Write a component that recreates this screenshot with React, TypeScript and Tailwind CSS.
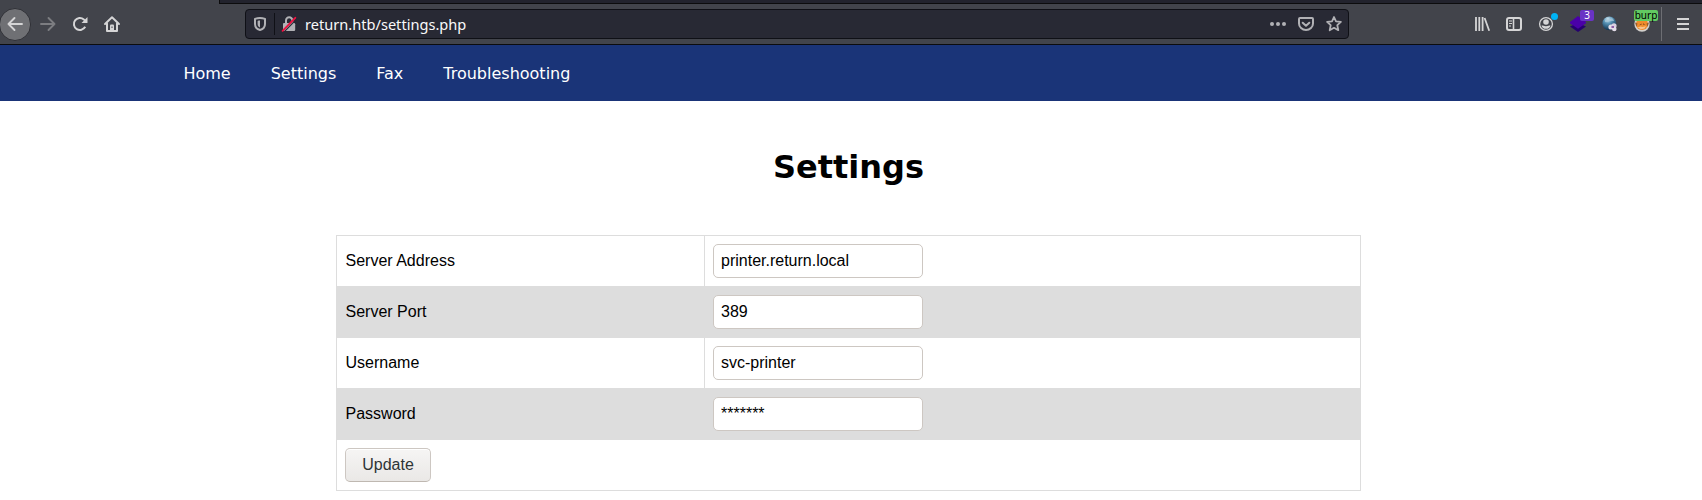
import React from "react";

type IconProps = { children: React.ReactNode; className?: string };

function Icon({ children, className = "" }: IconProps) {
  return (
    <svg viewBox="0 0 16 16" className={`h-4 w-4 shrink-0 overflow-visible ${className}`} fill="none" stroke="currentColor" strokeWidth="2" strokeLinecap="round" strokeLinejoin="round">
      {children}
    </svg>
  );
}

function Slot({ children }: { children: React.ReactNode }) {
  return <div className="relative flex h-8 w-8 shrink-0 items-center justify-center">{children}</div>;
}

function AddressBar() {
  return (
    <div className="ml-[125px] flex h-[30px] w-[1104px] shrink-0 items-center rounded border border-[#0f1016] bg-[#282934] text-[#b1b1b5]">
      <Icon className="ml-[6px]">
        <path d="M8 1.900c1.800 0 3.500.4 5 1V8c0 3-2 5.200-5 6C5 13.200 3 11 3 8V2.900c1.500-.6 3.200-1 5-1z" />
        <path d="M8 4.500c-1 0-1.700.1-2.400.4V8c0 1.800.900 2.900 2.400 3.500z" fill="currentColor" stroke="none" />
      </Icon>
      <div className="ml-[6px] h-[22px] w-px bg-[#0f1016]" />
      <Icon className="ml-[6px]">
        <path d="M5 7V4.500a3.200 3.200 0 0 1 6.400 0V7" strokeLinecap="butt" />
        <path d="M3 7h10a1.200 1.200 0 0 1 1.200 1.200v5.600a1.200 1.200 0 0 1-1.200 1.200H3a1 1 0 0 1-1-1V8a1 1 0 0 1 1-1z" fill="currentColor" stroke="none" />
        <path d="M3.400 15.600 15.600 3.100" stroke="#282934" strokeWidth="1.200" strokeLinecap="butt" />
        <path d="M1.600 14.800 14.300 1.800" stroke="#ed1141" strokeWidth="1.900" />
      </Icon>
      <span className="ml-[8px] font-['Noto_Sans',sans-serif] text-[14.6px] leading-[20px] text-[#f9f9fa]">return.htb/settings.php</span>
      <div className="mr-[6px] ml-auto flex items-center gap-3">
        <Icon>
          <g fill="currentColor" stroke="none">
            <circle cx="2" cy="8" r="2" />
            <circle cx="8" cy="8" r="2" />
            <circle cx="14" cy="8" r="2" />
          </g>
        </Icon>
        <Icon>
          <path d="M2 2h12a1 1 0 0 1 1 1v4.500a7 6.500 0 0 1-14 0V3a1 1 0 0 1 1-1z" />
          <path d="m4.700 6.700 3.300 3.100 3.300-3.100" />
        </Icon>
        <Icon>
          <path d="M8 1 10 5.400l4.900.5-3.600 3.300 1 5L8 11.800l-4.300 2.400 1-5L1.100 5.900 6 5.400z" strokeWidth="1.800" />
        </Icon>
      </div>
    </div>
  );
}

function Extensions() {
  return (
    <div className="ml-[117px] flex items-center text-[#d5d5d6]">
      <Slot>
        <Icon>
          <path d="M2 1v14M5.300 1v14M8.600 1v14M10.600 2l4.600 12.800" strokeWidth="1.800" strokeLinecap="butt" />
        </Icon>
      </Slot>
      <Slot>
        <Icon>
          <rect x="1" y="2" width="14" height="12" rx="2" />
          <path d="M7.500 2v12" strokeWidth="1.600" />
          <path d="M3 5h3M3 7.500h3M3 10h2" strokeWidth="1" strokeLinecap="butt" />
        </Icon>
      </Slot>
      <Slot>
        <Icon>
          <circle cx="8" cy="8" r="6.400" strokeWidth="1.300" />
          <circle cx="8" cy="6" r="2.800" fill="currentColor" stroke="none" />
          <path d="M3.500 9.700c1.200-.6 1.600.5 4.500.5s3.300-1.100 4.500-.5c-.6 1.900-2.200 3.100-4.500 3.100s-3.900-1.200-4.500-3.100z" fill="currentColor" stroke="none" />
        </Icon>
        <span className="absolute top-[5px] right-[4px] h-[7px] w-[7px] rounded-full bg-[#00b3f4]" />
      </Slot>
      <Slot>
        <Icon>
          <g stroke="none">
            <path d="m0 10.500 8-3.500 8 3.500L8 16z" fill="#25006f" />
            <path d="m0 6 8-6 8 6v1.300l-8 5.500-8-5.500z" fill="#4a00a8" />
          </g>
        </Icon>
        <span className="absolute top-[2px] left-[18px] h-[11px] w-[14px] rounded-[2px] bg-[#6933c4] text-center font-['Noto_Sans',sans-serif] text-[10px] leading-[11px] text-white">3</span>
      </Slot>
      <Slot>
        <Icon>
          <defs>
            <radialGradient id="globe" cx=".4" cy=".2" r=".8">
              <stop offset="0" stopColor="#d2e6ef" />
              <stop offset=".4" stopColor="#5792b5" />
              <stop offset="1" stopColor="#0d3150" />
            </radialGradient>
          </defs>
          <g stroke="none">
            <circle cx="7.300" cy="7.300" r="6.900" fill="url(#globe)" />
            <path d="M3 4c2-2 4 0 5-1l2-1c1 1 2 2 2 3L8 5 6 6 3 6z" fill="#a9cbdb" opacity=".7" />
            <circle cx="9" cy="11" r="2.600" fill="#e4deea" />
            <circle cx="12" cy="9.800" r="2.600" fill="#d9d0e2" />
            <circle cx="12.300" cy="13" r="2.300" fill="#e4deea" />
            <path d="M9.500 10h2.500v2H9.500z" fill="#8d5fa8" />
          </g>
        </Icon>
      </Slot>
      <Slot>
        <Icon>
          <g stroke="none">
            <circle cx="8" cy="8" r="7.700" fill="#d3d0cc" />
            <circle cx="8" cy="8" r="6" fill="#f08c2c" />
            <path d="m1 6.500 2.500 1L2.500 11zM15 6.500l-2.500 1 1 3.500z" fill="#9a5c28" />
            <path d="m5 9.300 2.500-1.800v1.300zM11.500 9 9 7.200v1.300z" fill="#7a421a" />
            <path d="m3.500 11.500 3-1 2 .5 3.500-.8-1.500 2.300-3.500.7z" fill="#f8c48c" />
          </g>
        </Icon>
        <span className="absolute top-[2px] left-[8px] h-[11px] w-6 rounded-[2px] bg-[#62ca62] text-center font-['Noto_Sans',sans-serif] text-[10px] leading-[11px] text-black">burp</span>
      </Slot>
      <div className="ml-[3px] h-[34px] w-px bg-[#6d6e73]" />
      <Icon className="ml-[13px]">
        <path d="M2 3h12M2 8h12M2 13h12" strokeLinecap="butt" />
      </Icon>
    </div>
  );
}

function Browser() {
  return (
    <div className="flex h-[45px] flex-col border-b border-[#0c0c0d] bg-[#42444b]">
      <div className="ml-[219px] h-1 shrink-0 border-b border-l border-[#0c0c0d] bg-[#22232d]" />
      <div className="flex h-10 items-center text-[#d5d5d6]">
        <div className="-ml-px flex h-[33px] w-8 shrink-0 items-center justify-center rounded-full border border-[#303137] bg-[#6f7074]">
          <Icon>
            <path d="M15 8H1.500M7.500 2 1.500 8l6 6" strokeWidth="1.900" />
          </Icon>
        </div>
        <Icon className="ml-[9px] text-[#7c7d81]">
          <path d="M1 8h13.500M8.500 2l6 6-6 6" strokeWidth="1.900" />
        </Icon>
        <Icon className="ml-4">
          <path d="M13.200 10.800A6 6 0 1 1 11.800 3.400l1.200 1.200" strokeLinecap="butt" />
          <path d="M15.500 1v5.500a.5.500 0 0 1-.5.500H9.500z" fill="currentColor" stroke="none" />
        </Icon>
        <Icon className="ml-4">
          <path d="M1 8 8 1.300 15 8" strokeWidth="1.900" />
          <path d="M3 7.500V15h10V7.500" />
          <path d="M6 14V9.500a1 1 0 0 1 1-1h2a1 1 0 0 1 1 1V14z" fill="currentColor" stroke="none" />
          <path d="M8 10.500v1.500" stroke="#42444b" strokeWidth="1" strokeLinecap="butt" />
        </Icon>
        <AddressBar />
        <Extensions />
      </div>
    </div>
  );
}

const fields = [
  { label: "Server Address", value: "printer.return.local" },
  { label: "Server Port", value: "389" },
  { label: "Username", value: "svc-printer" },
  { label: "Password", value: "*******" },
];

export default function App() {
  return (
    <div className="h-[500px] w-[1702px] overflow-hidden bg-white text-black">
      <Browser />
      <nav className="flex h-14 items-center gap-10 bg-[#1a3478] pt-0.5 pl-[183.4px] font-['DejaVu_Sans',sans-serif] text-base text-white">
        <a>Home</a>
        <a>Settings</a>
        <a>Fax</a>
        <a>Troubleshooting</a>
      </nav>
      <main className="flex w-[1697px] flex-col items-center">
        <h1 className="mt-[47px] font-['DejaVu_Sans',sans-serif] text-[32px] leading-[38px] font-bold">Settings</h1>
        <table className="mt-[49px] w-[1025px] table-fixed border-collapse border border-[#dddddd] font-['Liberation_Sans',Arial,sans-serif] text-base">
          <colgroup>
            <col className="w-[368px]" />
            <col />
          </colgroup>
          <tbody>
            {fields.map((field) => (
              <tr key={field.label} className="h-[51px] even:bg-[#dddddd]">
                <td className="border border-[#dddddd] py-0 pr-2 pl-[8.5px]">{field.label}</td>
                <td className="border border-[#dddddd] px-2 py-0">
                  <input
                    className="block h-[34px] w-[210px] rounded-[5px] border border-[#cdc7c2] bg-white px-[7px] py-0"
                    defaultValue={field.value}
                  />
                </td>
              </tr>
            ))}
            <tr className="h-[51px]">
              <td colSpan={2} className="px-2 py-0">
                <button className="block h-[34px] w-[86px] rounded-[5px] border border-[#cdc7c2] border-b-[#bfb8b1] bg-linear-to-b from-[#f6f5f4] to-[#eae8e6] text-[#2e3436] shadow-[inset_0_1px_#ffffff]">
                  Update
                </button>
              </td>
            </tr>
          </tbody>
        </table>
      </main>
    </div>
  );
}
